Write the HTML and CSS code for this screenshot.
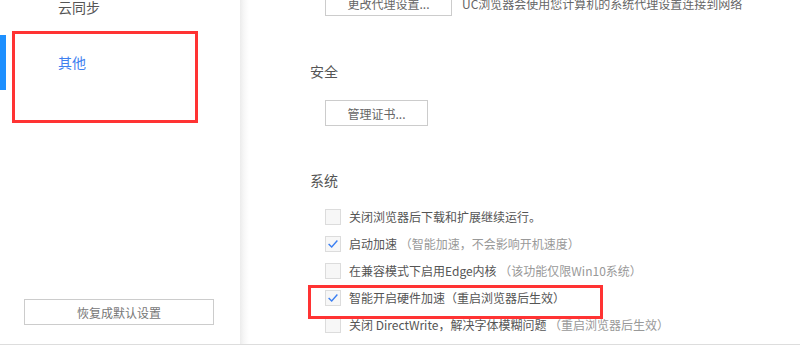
FILE: index.html
```html
<!DOCTYPE html>
<html lang="zh-CN">
<head>
    <meta charset="UTF-8">
    <meta name="viewport" content="width=device-width, initial-scale=1.0">
    <title>设置 - 其他</title>
    <link rel="stylesheet" href="styles.css">
</head>
<body>
    <div class="window">
        <div class="sidebar">
            <ul class="nav">
                <li class="nav-item">云同步</li>
                <li class="nav-item active">其他</li>
            </ul>
            <button class="btn btn-reset" type="button">恢复成默认设置</button>
            <div class="mark mark-nav"></div>
        </div>

        <div class="content">
            <div class="proxy-row">
                <button class="btn btn-proxy" type="button">更改代理设置...</button>
                <span class="proxy-tip">UC浏览器会使用您计算机的系统代理设置连接到网络</span>
            </div>

            <div class="section">
                <h3>安全</h3>
                <button class="btn btn-cert" type="button">管理证书...</button>
            </div>

            <div class="section">
                <h3>系统</h3>
                <ul class="options">
                    <li class="option">
                        <span class="box"></span>
                        <span class="label">关闭浏览器后下载和扩展继续运行。</span>
                    </li>
                    <li class="option">
                        <span class="box checked">
                            <svg viewBox="0 0 16 16" width="14" height="14"><polyline points="3,8 6.5,11.5 13,4"></polyline></svg>
                        </span>
                        <span class="label">启动加速 <span class="note">（智能加速，不会影响开机速度）</span></span>
                    </li>
                    <li class="option">
                        <span class="box"></span>
                        <span class="label">在兼容模式下启用Edge内核 <span class="note">（该功能仅限Win10系统）</span></span>
                    </li>
                    <li class="option">
                        <span class="box checked">
                            <svg viewBox="0 0 16 16" width="14" height="14"><polyline points="3,8 6.5,11.5 13,4"></polyline></svg>
                        </span>
                        <span class="label">智能开启硬件加速（重启浏览器后生效）</span>
                    </li>
                    <li class="option">
                        <span class="box"></span>
                        <span class="label">关闭 DirectWrite，解决字体模糊问题 <span class="note">（重启浏览器后生效）</span></span>
                    </li>
                </ul>
            </div>
            <div class="mark mark-hw"></div>
        </div>
    </div>
</body>
</html>
```

FILE: styles.css
```css
body {
    margin: 0;
    background-color: #fff;
    font-family: "Noto Sans CJK SC", "Microsoft YaHei", sans-serif;
    font-size: 12px;
    color: #555;
    overflow: hidden;
}

.window {
    display: flex;
    height: 344px;
    border-bottom: 1px solid #ddd;
    overflow: hidden;
}

/* 左侧导航 */
.sidebar {
    position: relative;
    width: 240px;
    flex-shrink: 0;
    display: flex;
    flex-direction: column;
    background-color: #fff;
}

.nav {
    list-style: none;
    margin: -20px 0 0 0;
    padding: 0;
}

.nav-item {
    height: 55px;
    line-height: 54px;
    padding-left: 58px;
    font-size: 14px;
    color: #555;
    border-left: 6px solid transparent;
    margin-left: -6px;
}

.nav-item.active {
    color: #3f80f0;
    border-left-color: #1e90ff;
    margin-left: 0;
    padding-left: 52px;
}

.btn {
    background-color: #fff;
    border: 1px solid #ccc;
    font-family: inherit;
    font-size: 12px;
    color: #666;
    height: 26px;
    padding: 0;
    cursor: pointer;
}

.btn-reset {
    margin: auto 26px 19px 24px;
    color: #777;
}

/* 右侧内容 */
.content {
    position: relative;
    flex: 1;
    padding-left: 70px;
    background: linear-gradient(to right, #ececec 0, #f7f7f7 4px, #fff 9px);
}

.proxy-row {
    display: flex;
    align-items: center;
    gap: 10px;
    margin-top: -10px;
    padding-left: 15px;
}

.btn-proxy {
    width: 127px;
}

.proxy-tip {
    color: #666;
}

.section {
    margin-top: 45px;
}

.section + .section {
    margin-top: 44px;
}

h3 {
    margin: 0 0 19px 0;
    font-size: 14px;
    font-weight: normal;
    line-height: 20px;
    color: #555;
}

.btn-cert {
    width: 103px;
    margin-left: 15px;
}

.options {
    list-style: none;
    margin: 0;
    padding: 0 0 0 15px;
}

.option {
    display: flex;
    align-items: center;
    gap: 8px;
    height: 16px;
    margin-bottom: 11px;
}

.box {
    width: 14px;
    height: 14px;
    border: 1px solid #dcdcdc;
    background-color: #f7f7f7;
    display: flex;
    align-items: center;
    justify-content: center;
}

.box svg polyline {
    fill: none;
    stroke: #3b7ff2;
    stroke-width: 1.6;
}

.label {
    line-height: 16px;
    white-space: nowrap;
}

.note {
    color: #999;
}

/* 红框标注 */
.mark {
    position: absolute;
    border: 3px solid #f33;
    box-sizing: border-box;
}

.mark-nav {
    left: 12px;
    top: 31px;
    width: 186px;
    height: 92px;
}

.mark-hw {
    left: 68px;
    top: 285px;
    width: 295px;
    height: 34px;
}
```
